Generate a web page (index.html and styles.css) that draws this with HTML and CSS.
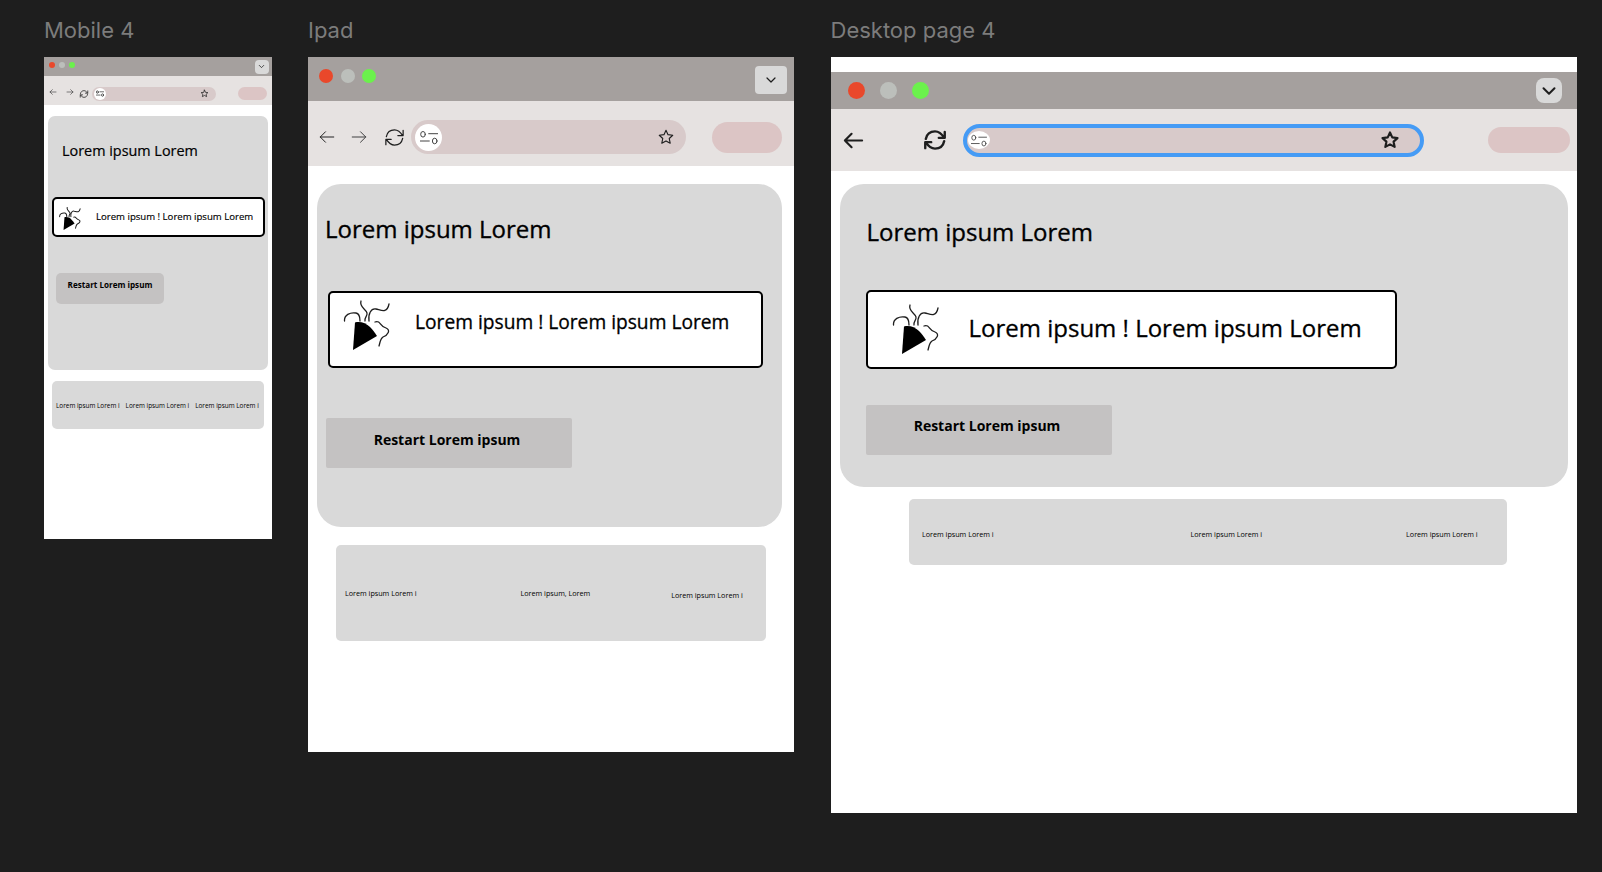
FILE: index.html
```html
<!DOCTYPE html>
<html lang="en">
<head>
  <meta charset="UTF-8">
  <meta name="viewport" content="width=device-width, initial-scale=1.0">
  <title>Mobile, Ipad and Desktop frames</title>
  <link rel="stylesheet" href="styles.css">
</head>
<body>
  <svg class="sprites" width="0" height="0">
    <symbol id="i-back" viewBox="0 0 24 24"><path d="M21 12H3M10 5l-7 7 7 7"/></symbol>
    <symbol id="i-forward" viewBox="0 0 24 24"><path d="M3 12h18M14 5l7 7-7 7"/></symbol>
    <symbol id="i-reload" viewBox="0 0 24 24"><path d="M3.500 11C4.500 6 8 4 12 4c3.500 0 6 2 8.500 6M21 4.500V10h-5.500M20.500 13c-1 5-4.500 7-8.500 7-3.500 0-6-2-8.500-6M3 19.500V14h5.500"/></symbol>
    <symbol id="i-sliders" viewBox="0 0 18 15"><ellipse cx="3" cy="4.300" rx="2.300" ry="2.800"/><ellipse cx="14.700" cy="11" rx="2.300" ry="2.800"/><path d="M8.700 3.700h9M0 11h9.300"/></symbol>
    <symbol id="i-star" viewBox="0 0 24 24"><path d="M12 3l2.700 5.900 6.300.8-4.700 4.300 1.300 6.300L12 17.200l-5.600 3.100 1.300-6.300L3 9.700l6.300-.8z"/></symbol>
    <symbol id="i-chevron" viewBox="0 0 24 24"><path d="M6 9l6 6 6-6"/></symbol>
    <symbol id="i-popper" viewBox="0 0 48 50">
      <path class="popper-body" d="M10 50l2-27.500C17 21 23 23 27 27c3 3 5 6 7 9z"/>
      <path d="M1.500 21C1 15 7 12 13 13c3 .5 4 3 4 8M18 1c-2 6 5 8 6 12 .7 3-3 5-2 8M26 21c-1-7 2-13 7-12 5 1 11 5 13-5M32 22c6-2 4 4 11 6 5 2 2 7-3 9-3 2-3 6-4 9"/>
    </symbol>
  </svg>

  <div class="canvas">
    <section class="frame-col mobile">
      <h2 class="frame-label">Mobile 4</h2>
      <div class="frame">
        <div class="titlebar">
          <span class="dot dot-red"></span>
          <span class="dot dot-grey"></span>
          <span class="dot dot-green"></span>
          <span class="menu-btn"><svg class="icon"><use href="#i-chevron"/></svg></span>
        </div>
        <div class="toolbar">
          <svg class="icon nav-back"><use href="#i-back"/></svg>
          <svg class="icon nav-forward"><use href="#i-forward"/></svg>
          <svg class="icon nav-reload"><use href="#i-reload"/></svg>
          <div class="address">
            <span class="site-info"><svg class="icon"><use href="#i-sliders"/></svg></span>
            <svg class="icon star"><use href="#i-star"/></svg>
          </div>
          <span class="pill"></span>
        </div>
        <div class="card">
          <h1 class="card-title">Lorem ipsum Lorem</h1>
          <div class="banner">
            <svg class="icon popper"><use href="#i-popper"/></svg>
            <p class="banner-text">Lorem ipsum ! Lorem ipsum Lorem</p>
          </div>
          <div class="restart-btn">Restart Lorem ipsum</div>
        </div>
        <div class="strip">
          <span class="strip-item">Lorem ipsum Lorem i</span>
          <span class="strip-item">Lorem ipsum Lorem i</span>
          <span class="strip-item">Lorem ipsum Lorem i</span>
        </div>
      </div>
    </section>

    <section class="frame-col ipad">
      <h2 class="frame-label">Ipad</h2>
      <div class="frame">
        <div class="titlebar">
          <span class="dot dot-red"></span>
          <span class="dot dot-grey"></span>
          <span class="dot dot-green"></span>
          <span class="menu-btn"><svg class="icon"><use href="#i-chevron"/></svg></span>
        </div>
        <div class="toolbar">
          <svg class="icon nav-back"><use href="#i-back"/></svg>
          <svg class="icon nav-forward"><use href="#i-forward"/></svg>
          <svg class="icon nav-reload"><use href="#i-reload"/></svg>
          <div class="address">
            <span class="site-info"><svg class="icon"><use href="#i-sliders"/></svg></span>
            <svg class="icon star"><use href="#i-star"/></svg>
          </div>
          <span class="pill"></span>
        </div>
        <div class="card">
          <h1 class="card-title">Lorem ipsum Lorem</h1>
          <div class="banner">
            <svg class="icon popper"><use href="#i-popper"/></svg>
            <p class="banner-text">Lorem ipsum ! Lorem ipsum Lorem</p>
          </div>
          <div class="restart-btn">Restart Lorem ipsum</div>
        </div>
        <div class="strip">
          <span class="strip-item">Lorem ipsum Lorem i</span>
          <span class="strip-item">Lorem ipsum, Lorem</span>
          <span class="strip-item strip-item-low">Lorem ipsum Lorem i</span>
        </div>
      </div>
    </section>

    <section class="frame-col desktop">
      <h2 class="frame-label">Desktop page 4</h2>
      <div class="frame">
        <div class="titlebar">
          <span class="dot dot-red"></span>
          <span class="dot dot-grey"></span>
          <span class="dot dot-green"></span>
          <span class="menu-btn"><svg class="icon"><use href="#i-chevron"/></svg></span>
        </div>
        <div class="toolbar">
          <svg class="icon nav-back"><use href="#i-back"/></svg>
          <svg class="icon nav-reload"><use href="#i-reload"/></svg>
          <div class="address">
            <span class="site-info"><svg class="icon"><use href="#i-sliders"/></svg></span>
            <svg class="icon star"><use href="#i-star"/></svg>
          </div>
          <span class="pill"></span>
        </div>
        <div class="card">
          <h1 class="card-title">Lorem ipsum Lorem</h1>
          <div class="banner">
            <svg class="icon popper"><use href="#i-popper"/></svg>
            <p class="banner-text">Lorem ipsum ! Lorem ipsum Lorem</p>
          </div>
          <div class="restart-btn">Restart Lorem ipsum</div>
        </div>
        <div class="strip">
          <span class="strip-item">Lorem ipsum Lorem i</span>
          <span class="strip-item">Lorem ipsum Lorem i</span>
          <span class="strip-item">Lorem ipsum Lorem i</span>
        </div>
      </div>
    </section>
  </div>
</body>
</html>
```

FILE: styles.css
```css
* {
  box-sizing: border-box;
}

body {
  margin: 0;
  height: 872px;
  overflow: hidden;
  background-color: #1e1e1e;
  font-family: 'Open Sans', sans-serif;
  color: #000;
}

.sprites {
  display: block;
}

.canvas {
  display: flex;
  gap: 36.500px;
  padding-left: 44px;
}

.frame-label {
  margin: 0;
  height: 57px;
  padding-top: 16px;
  font-family: 'Inter', sans-serif;
  font-size: 22px;
  line-height: 29px;
  font-weight: 400;
  color: #7c7c7c;
}

.frame {
  display: flex;
  flex-direction: column;
  background-color: #fff;
}

.icon {
  display: block;
  flex: none;
  fill: none;
  stroke: #1e1e1e;
  stroke-linecap: round;
  stroke-linejoin: round;
}

.popper-body {
  fill: #000;
  stroke: none;
}

.titlebar {
  display: flex;
  align-items: center;
  background-color: #a5a09e;
}

.dot {
  flex: none;
  border-radius: 50%;
}

.dot-red {
  background-color: #e9482b;
}

.dot-grey {
  background-color: #bcbfbb;
}

.dot-green {
  background-color: #6bf14c;
}

.menu-btn {
  display: flex;
  align-items: center;
  justify-content: center;
  margin-left: auto;
  background-color: #d9d9d9;
}

.toolbar {
  display: flex;
  align-items: center;
  background-color: #e6e2e1;
}

.address {
  display: flex;
  align-items: center;
  background-color: #d8caca;
  border-radius: 999px;
}

.site-info {
  display: flex;
  align-items: center;
  justify-content: center;
  background-color: #fff;
  border-radius: 50%;
}

.star {
  margin-left: auto;
}

.pill {
  margin-left: auto;
  background-color: #dcc5c5;
  border-radius: 999px;
}

.card {
  background-color: #d9d9d9;
}

/* a thin stroke gets the reference's medium weight at regular widths */
.card-title {
  margin: 0;
  font-weight: 400;
  -webkit-text-stroke: .35px #000;
}

.banner {
  display: flex;
  background-color: #fff;
  border: 2px solid #000;
}

.banner-text {
  margin: 0;
  font-weight: 400;
  white-space: nowrap;
  -webkit-text-stroke: .3px #000;
}

.restart-btn {
  background-color: #c4c2c2;
  font-weight: 700;
  text-align: center;
}

.strip {
  display: flex;
  align-items: center;
  background-color: #d9d9d9;
}

.strip-item {
  white-space: nowrap;
}

/* mobile frame */
.mobile .frame {
  width: 227.500px;
  height: 482px;
}

.mobile .titlebar {
  height: 19px;
  padding: 0 3px 0 5px;
  gap: 4px;
}

.mobile .dot {
  width: 6px;
  height: 6px;
  margin-bottom: 4px;
}

.mobile .menu-btn {
  width: 14px;
  height: 14px;
  border-radius: 4px;
}

.mobile .menu-btn .icon {
  width: 9px;
  height: 9px;
  stroke-width: 2;
}

.mobile .toolbar {
  height: 29px;
  padding: 6px 5px 0;
}

.mobile .nav-back,
.mobile .nav-forward {
  width: 8px;
  height: 8px;
  stroke-width: 1.800;
  stroke: #333;
}

.mobile .nav-back {
  margin-top: -3px;
}

.mobile .nav-forward {
  margin: -3px 0 0 9px;
}

.mobile .nav-reload {
  width: 10px;
  height: 10px;
  margin-left: 5px;
  stroke-width: 1.800;
}

.mobile .address {
  width: 124px;
  height: 14px;
  margin-left: 3px;
  padding: 0 7px 0 2px;
}

.mobile .site-info {
  width: 12px;
  height: 12px;
}

.mobile .site-info .icon {
  width: 8px;
  height: 7px;
  stroke-width: 1.500;
}

.mobile .star {
  width: 9px;
  height: 9px;
  stroke-width: 2;
}

.mobile .pill {
  width: 29px;
  height: 13px;
}

.mobile .card {
  width: 220px;
  height: 254px;
  margin: 11px 0 0 4px;
  padding-top: 25px;
  border-radius: 7px;
}

.mobile .card-title {
  margin-left: 14px;
  font-size: 14.400px;
  line-height: 20px;
  -webkit-text-stroke-width: .2px;
}

.mobile .banner {
  width: 213px;
  height: 40px;
  margin: 36px 0 0 4px;
  padding: 8px 0 0 4px;
  border-radius: 5px;
}

.mobile .popper {
  width: 24px;
  height: 23px;
  stroke-width: 2.200;
}

.mobile .banner-text {
  margin: 3px 0 0 14px;
  font-size: 9.600px;
  line-height: 13px;
  -webkit-text-stroke-width: .15px;
}

.mobile .restart-btn {
  width: 108px;
  height: 31px;
  margin: 36px 0 0 8px;
  padding-top: 5px;
  border-radius: 5px;
  font-size: 8.100px;
  line-height: 13px;
}

.mobile .strip {
  width: 212px;
  height: 48px;
  margin: 11px 0 0 8px;
  padding-left: 4px;
  gap: 6px;
  border-radius: 5px;
  font-size: 6.400px;
}

/* ipad frame */
.ipad .frame {
  width: 486px;
  height: 695px;
}

.ipad .titlebar {
  height: 44px;
  padding: 0 7px 0 11px;
  gap: 7.500px;
}

.ipad .dot {
  width: 14px;
  height: 14px;
  margin-bottom: 6px;
}

.ipad .menu-btn {
  width: 32px;
  height: 28px;
  margin-top: 2px;
  border-radius: 4px;
}

.ipad .menu-btn .icon {
  width: 16px;
  height: 16px;
  stroke-width: 1.800;
}

.ipad .toolbar {
  height: 65px;
  padding: 7px 12px 0 10px;
}

.ipad .nav-back,
.ipad .nav-forward {
  width: 18px;
  height: 18px;
  stroke-width: 1.300;
}

.ipad .nav-forward {
  margin-left: 14px;
  stroke: #3c3c3c;
}

.ipad .nav-reload {
  width: 23px;
  height: 23px;
  margin-left: 15px;
  stroke-width: 1.300;
}

.ipad .address {
  width: 275px;
  height: 34px;
  margin-left: 5px;
  padding: 0 11px 0 4px;
}

.ipad .site-info {
  width: 27px;
  height: 27px;
}

.ipad .site-info .icon {
  width: 18px;
  height: 15px;
  stroke-width: 1;
  stroke: #444;
}

.ipad .star {
  width: 18px;
  height: 18px;
  stroke-width: 1.500;
}

.ipad .pill {
  width: 70px;
  height: 31px;
}

.ipad .card {
  width: 465px;
  height: 343px;
  margin: 18px 0 0 9px;
  padding-top: 29px;
  border-radius: 24px;
}

.ipad .card-title {
  margin-left: 8px;
  font-size: 24px;
  line-height: 32px;
}

.ipad .banner {
  width: 435px;
  height: 77px;
  margin: 46px 0 0 11px;
  padding: 7px 0 0 13px;
  border-radius: 5px;
}

.ipad .popper {
  width: 48px;
  height: 50px;
  stroke-width: 1.300;
}

.ipad .banner-text {
  margin: 6px 0 0 24px;
  font-size: 19.200px;
  line-height: 32px;
}

.ipad .restart-btn {
  width: 246px;
  height: 50px;
  margin: 50px 0 0 9px;
  padding-top: 12px;
  padding-right: 4px;
  border-radius: 2px;
  font-size: 14px;
  line-height: 20px;
}

.ipad .strip {
  width: 430px;
  height: 96px;
  margin: 18px 0 0 28px;
  padding-left: 9px;
  gap: 104px;
  border-radius: 5px;
  font-size: 7.200px;
  font-weight: 500;
}

.strip-item-low {
  margin: 4px 0 0 -23px;
}

/* desktop frame, has a white strip over the title bar */
.desktop .frame {
  width: 746px;
  height: 756px;
  padding-top: 15px;
}

.desktop .titlebar {
  height: 37px;
  padding: 0 15px 0 17px;
  gap: 15px;
}

.desktop .dot {
  width: 17px;
  height: 17px;
}

.desktop .menu-btn {
  width: 26px;
  height: 25px;
  border-radius: 8px;
}

.desktop .menu-btn .icon {
  width: 22px;
  height: 22px;
  stroke-width: 2.200;
}

.desktop .toolbar {
  height: 62px;
  padding: 0 7px 0 11px;
}

.desktop .nav-back {
  width: 23px;
  height: 23px;
  stroke-width: 2.200;
}

.desktop .nav-reload {
  width: 26px;
  height: 26px;
  margin-left: 57px;
  stroke-width: 2.200;
}

.desktop .address {
  width: 461px;
  height: 33px;
  margin-left: 15px;
  padding: 0 20px 0 1px;
  border: 4px solid #459bf5;
}

.desktop .site-info {
  width: 22px;
  height: 18px;
}

.desktop .site-info .icon {
  width: 16px;
  height: 13px;
  stroke-width: 1;
  stroke: #444;
}

.desktop .star {
  width: 20px;
  height: 20px;
  stroke-width: 2.600;
}

.desktop .pill {
  width: 82px;
  height: 26px;
}

.desktop .card {
  width: 728px;
  height: 303px;
  margin: 13px 0 0 9px;
  padding-top: 32px;
  border-radius: 24px;
}

.desktop .card-title {
  margin-left: 27px;
  font-size: 24px;
  line-height: 32px;
}

.desktop .banner {
  width: 531px;
  height: 79px;
  margin: 42px 0 0 26px;
  padding: 12px 0 0 24px;
  border-radius: 5px;
}

.desktop .popper {
  width: 48px;
  height: 50px;
  stroke-width: 1.300;
}

.desktop .banner-text {
  margin: 8px 0 0 29px;
  font-size: 24px;
  line-height: 32px;
}

.desktop .restart-btn {
  width: 246px;
  height: 50px;
  margin: 36px 0 0 26px;
  padding-top: 11px;
  padding-right: 3px;
  border-radius: 2px;
  font-size: 14px;
  line-height: 20px;
}

.desktop .strip {
  width: 598px;
  height: 66px;
  margin: 12px 0 0 78px;
  padding: 4px 0 0 13.500px;
  gap: 197px;
  border-radius: 5px;
  font-size: 7.200px;
}

.desktop .strip-item + .strip-item + .strip-item {
  margin-left: -53px;
}
```
